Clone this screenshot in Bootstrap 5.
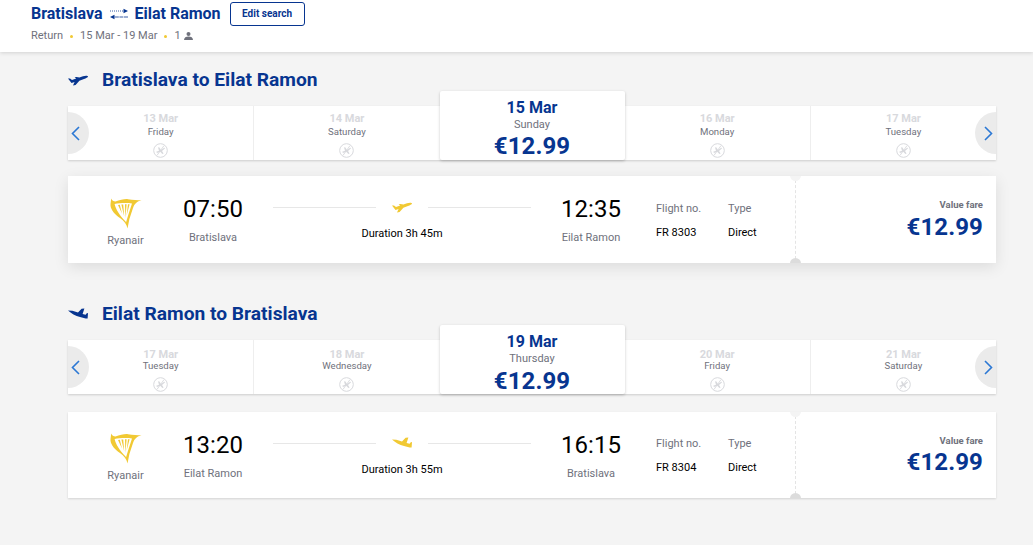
<!DOCTYPE html>
<html lang="en"><head><meta charset="utf-8"><title>Flights</title>
<link href="https://cdn.jsdelivr.net/npm/bootstrap@5.3.0/dist/css/bootstrap.min.css" rel="stylesheet">
<style>
html,body{height:545px;overflow:hidden}
body{background:#f4f4f4;font-family:Roboto,"Liberation Sans",sans-serif;color:#000;font-size:11px}
.topbar{height:52px;background:#fff;box-shadow:0 1px 4px rgba(0,0,0,.14);padding:2px 0 0 31px}
.route-name{font-size:16px;font-weight:700;color:#073590;line-height:24px}
.route-arrows{width:20px;height:12px;margin:0 5px 0 7px}
.edit-btn{width:75px;height:24px;margin-left:9px;padding:0;border:1px solid #073590;border-radius:3px;background:#fff;color:#073590;font-size:10px;font-weight:700;line-height:22px}
.trip-meta{font-size:11px;color:#6f717c;line-height:14px;margin-top:3px}
.meta-dot{width:3px;height:3px;border-radius:50%;background:#f1c933;margin:0 7px}
.person-icon{margin-left:3px}
.results{width:928px;margin-left:68px}
.leg-title{height:28px;margin-top:14px;font-size:19.2px;font-weight:700;color:#073590;line-height:28px}
.leg-title svg{width:20px;height:12px;margin-right:14px;fill:#073590}
.leg-two{margin-top:37px}
.date-strip{position:relative;height:54px;margin-top:12px;background:#fff;box-shadow:0 1px 2px rgba(0,0,0,.16);overflow:visible}
.date-cell{flex:1 1 0;min-width:0;height:54px;text-align:center;border-right:1px solid #eee;padding-top:6px}
.date-cell.before-active,.date-cell:last-of-type{border-right:0}
.cell-date{font-size:11px;font-weight:700;color:#d8d9dd;line-height:14px}
.strip-tight .cell-date{margin-top:2px;margin-bottom:-2px}
.cell-day{font-size:9.6px;color:#6f717c;line-height:12px}
.no-flight{display:block;width:15px;height:15px;margin:5px auto 0}
.date-active{position:relative;flex:0 0 185px;height:69px;margin-top:-15px;background:#fff;border-radius:2px;box-shadow:0 1px 3px rgba(0,0,0,.22);text-align:center;padding-top:8px;z-index:2}
.active-date{font-size:16px;font-weight:700;color:#073590;line-height:18px}
.active-day{font-size:11px;color:#6f717c;line-height:14px;margin-top:1px}
.active-price{font-size:24px;font-weight:700;color:#073590;line-height:28px;letter-spacing:.1px}
.strip-tight .active-price{margin-top:1px}
.strip-arrow{position:absolute;top:6px;width:21px;height:42px;background:#ebebeb;display:flex;align-items:center}
.strip-arrow.prev{left:0;border-radius:0 21px 21px 0;justify-content:flex-start;padding-left:3px}
.strip-arrow.next{right:0;border-radius:21px 0 0 21px;justify-content:flex-end;padding-right:3px}
.strip-arrow svg{width:9px;height:15px;fill:none;stroke:#2b78d4;stroke-width:1.6}
.flight-card{position:relative;display:grid;grid-template-columns:115px 60px 30px 258px 30px 60px 35px 72px 67px 1fr;height:87px;margin-top:16px;background:#fff;box-shadow:0 4px 14px rgba(0,0,0,.1);overflow:hidden}
.flight-card.low{height:86px;margin-top:18px;box-shadow:0 1px 2px rgba(0,0,0,.14)}
.logo-col{grid-column:1;text-align:center;padding-top:21px;font-size:11px;color:#6f717c}
.logo-col svg{display:block;width:32px;height:32px;margin:0 auto 4px;fill:#f1c933}
.low .logo-col{padding-top:20px}
.time-col{text-align:center;padding-top:18px;white-space:nowrap;display:flex;flex-direction:column;align-items:center}
.time-big{font-size:24px;line-height:30px;color:#000}
.time-city{font-size:11px;color:#6f717c;line-height:14px;margin-top:7px}
.duration-col{grid-column:4;padding-top:24px;text-align:center;font-size:11px;line-height:14px}
.path-line{display:flex;align-items:center;height:14px;margin-bottom:13px}
.path-line i{flex:1;height:1px;background:#e7e7e7}
.path-line svg{width:20px;height:12px;margin:0 16px;fill:#f1c933}
.info-col{padding-top:26px;font-size:11px;line-height:14px}
.low .info-col{padding-top:25px}
.info-label{color:#6f717c;margin-bottom:10px}
.fare-col{grid-column:10;text-align:right;padding:23px 13px 0 0}
.fare-name{font-size:9.5px;font-weight:700;color:#6f717c;line-height:12px}
.fare-price{font-size:24px;font-weight:700;color:#073590;line-height:28px;letter-spacing:.1px;margin-top:2px}
.low .fare-price{margin-top:1px}
.ticket-cut{position:absolute;left:727px;top:4px;bottom:4px;border-left:1px dashed #e4e4e4}
.notch{position:absolute;left:727px;width:11px;height:11px;margin-left:-5px;border-radius:50%}
.notch.top{top:-6px;background:#f4f4f4}
.notch.bottom{bottom:-6px;background:#dcdcdc}
</style></head>
<body>
<svg width="0" height="0" class="position-absolute">
<defs>
<symbol id="plane" viewBox="0 0 20 12"><path d="M0 4.6 L2 4.6 L4 6 L8.2 4.6 L6.6 3.2 L8.6 3 L11.4 3.6 L15 2.3 C17 1.7 19.6 1.6 20 2.4 C20.1 3.4 18 4.2 16 5 L11.4 6.8 L7.6 11 L5 11.5 L6.6 8 L3.5 9 Z"/></symbol>
<symbol id="plane-back" viewBox="0 0 20 12"><path d="M0 2.4 L4.4 2.8 L10 4.6 L13.6 .8 L16.4 .4 L14.6 6 L17.6 6.8 L19 5 L20 5.2 L19.6 10.6 C17 10.6 14.6 9.8 12 9 C7.6 7.6 3 5.4 0 2.4 Z"/></symbol>
<symbol id="harp" viewBox="0 0 32 32">
<path d="M1 1.5 C2 3.5 3.6 4.3 5.5 4.5 C10 2.8 15 1.8 18 2.2 C23 2.8 27.5 3.3 31.5 3.3 C27 4.6 24.5 6.5 23 11 L19.4 22 L17.5 31.5 C16.8 27 14 24 10 21 C5 17.5 0.8 13 0.5 8.5 C0.4 6 1.2 3.8 1 1.5 Z M4.6 7 C6 13 9.5 18 15.6 24.6 L16 25.4 L18.4 17.5 L22 6.4 C17 5.6 9.6 5.8 4.6 7 Z" fill-rule="evenodd"/>
<path d="M8 8 L9.8 7.8 L12 16.5 Z M11.4 7.6 L13.2 7.4 L14.2 19.6 Z M15 7.2 L16.6 7.2 L15.4 21 Z M18 7.2 L19.6 7.2 L16.6 18.4 Z"/>
</symbol>
<symbol id="noflight" viewBox="0 0 15 15">
<circle cx="7.5" cy="7.5" r="6.8" fill="none" stroke="#d8d9dd" stroke-width="1"/>
<path d="M3.2 8.8 L6 7.7 L5 4.4 L6.2 4.2 L8 7 L10.8 4.9 C11.6 4.5 12.1 4.8 11.9 5.4 L9 8 L10.6 10.6 L9.4 11 L7.2 8.8 L4 9.9 Z" fill="#d8d9dd"/>
<path d="M11 2.6 L4 12.4" stroke="#d8d9dd" stroke-width=".9"/>
</symbol>
</defs>
</svg>

<header class="topbar">
  <div class="d-flex align-items-center">
    <span class="route-name">Bratislava</span>
    <svg class="route-arrows" viewBox="0 0 20 12" fill="none" stroke="#073590" stroke-width=".8">
      <path d="M1 3 H17" stroke-dasharray="1 1"/><path d="M14.5 .8 L19 3 L14.5 5.2 Z" fill="#073590" stroke="none"/>
      <path d="M19 9 H3" stroke-dasharray="4 .6"/><path d="M5.5 6.8 L1 9 L5.5 11.2 Z" fill="#073590" stroke="none"/>
    </svg>
    <span class="route-name">Eilat Ramon</span>
    <button type="button" class="btn edit-btn">Edit search</button>
  </div>
  <div class="trip-meta d-flex align-items-center">
    <span>Return</span><span class="meta-dot"></span><span>15 Mar - 19 Mar</span><span class="meta-dot"></span><span>1</span>
    <svg class="person-icon" width="9" height="8" viewBox="0 0 9 8" fill="#6f717c"><circle cx="4.5" cy="2" r="2"/><path d="M0 8 C0 5.5 2 4.4 4.5 4.4 S9 5.5 9 8 Z"/></svg>
  </div>
</header>

<main class="results">
  <h2 class="leg-title d-flex align-items-center mb-0"><svg><use href="#plane"/></svg>Bratislava to Eilat Ramon</h2>
  <div class="date-strip d-flex">
    <div class="date-cell"><div class="cell-date">13 Mar</div><div class="cell-day">Friday</div><svg class="no-flight"><use href="#noflight"/></svg></div>
    <div class="date-cell before-active"><div class="cell-date">14 Mar</div><div class="cell-day">Saturday</div><svg class="no-flight"><use href="#noflight"/></svg></div>
    <div class="date-active"><div class="active-date">15 Mar</div><div class="active-day">Sunday</div><div class="active-price">€12.99</div></div>
    <div class="date-cell"><div class="cell-date">16 Mar</div><div class="cell-day">Monday</div><svg class="no-flight"><use href="#noflight"/></svg></div>
    <div class="date-cell"><div class="cell-date">17 Mar</div><div class="cell-day">Tuesday</div><svg class="no-flight"><use href="#noflight"/></svg></div>
    <span class="strip-arrow prev"><svg viewBox="0 0 9 15"><path d="M8 1 L1.5 7.5 L8 14"/></svg></span>
    <span class="strip-arrow next"><svg viewBox="0 0 9 15"><path d="M1 1 L7.5 7.5 L1 14"/></svg></span>
  </div>
  <article class="flight-card">
    <div class="logo-col"><svg><use href="#harp"/></svg>Ryanair</div>
    <div class="time-col"><span class="time-big">07:50</span><span class="time-city">Bratislava</span></div>
    <div class="duration-col"><div class="path-line"><i></i><svg><use href="#plane"/></svg><i></i></div>Duration 3h 45m</div>
    <div class="time-col" style="grid-column:6"><span class="time-big">12:35</span><span class="time-city">Eilat Ramon</span></div>
    <div class="info-col" style="grid-column:8"><div class="info-label">Flight no.</div><div>FR 8303</div></div>
    <div class="info-col"><div class="info-label">Type</div><div>Direct</div></div>
    <div class="fare-col"><div class="fare-name">Value fare</div><div class="fare-price">€12.99</div></div>
    <span class="ticket-cut" aria-hidden="true"></span><span class="notch top"></span><span class="notch bottom"></span>
  </article>

  <h2 class="leg-title leg-two d-flex align-items-center mb-0"><svg><use href="#plane-back"/></svg>Eilat Ramon to Bratislava</h2>
  <div class="date-strip strip-tight d-flex">
    <div class="date-cell"><div class="cell-date">17 Mar</div><div class="cell-day">Tuesday</div><svg class="no-flight"><use href="#noflight"/></svg></div>
    <div class="date-cell before-active"><div class="cell-date">18 Mar</div><div class="cell-day">Wednesday</div><svg class="no-flight"><use href="#noflight"/></svg></div>
    <div class="date-active"><div class="active-date">19 Mar</div><div class="active-day">Thursday</div><div class="active-price">€12.99</div></div>
    <div class="date-cell"><div class="cell-date">20 Mar</div><div class="cell-day">Friday</div><svg class="no-flight"><use href="#noflight"/></svg></div>
    <div class="date-cell"><div class="cell-date">21 Mar</div><div class="cell-day">Saturday</div><svg class="no-flight"><use href="#noflight"/></svg></div>
    <span class="strip-arrow prev"><svg viewBox="0 0 9 15"><path d="M8 1 L1.5 7.5 L8 14"/></svg></span>
    <span class="strip-arrow next"><svg viewBox="0 0 9 15"><path d="M1 1 L7.5 7.5 L1 14"/></svg></span>
  </div>
  <article class="flight-card low">
    <div class="logo-col"><svg><use href="#harp"/></svg>Ryanair</div>
    <div class="time-col"><span class="time-big">13:20</span><span class="time-city">Eilat Ramon</span></div>
    <div class="duration-col"><div class="path-line"><i></i><svg><use href="#plane-back"/></svg><i></i></div>Duration 3h 55m</div>
    <div class="time-col" style="grid-column:6"><span class="time-big">16:15</span><span class="time-city">Bratislava</span></div>
    <div class="info-col" style="grid-column:8"><div class="info-label">Flight no.</div><div>FR 8304</div></div>
    <div class="info-col"><div class="info-label">Type</div><div>Direct</div></div>
    <div class="fare-col"><div class="fare-name">Value fare</div><div class="fare-price">€12.99</div></div>
    <span class="ticket-cut" aria-hidden="true"></span><span class="notch top"></span><span class="notch bottom"></span>
  </article>
</main>
<script src="https://cdn.jsdelivr.net/npm/bootstrap@5.3.0/dist/js/bootstrap.bundle.min.js"></script>
</body></html>
